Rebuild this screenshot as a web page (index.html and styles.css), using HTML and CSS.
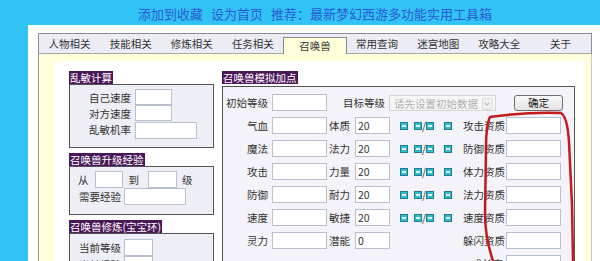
FILE: index.html
```html
<!DOCTYPE html>
<html lang="zh-CN">
<head>
    <meta charset="UTF-8">
    <title>梦幻西游多功能实用工具箱</title>
    <link rel="stylesheet" href="styles.css">
</head>
<body>

    <div class="header">
        <span>添加到收藏</span><span>设为首页</span><span>推荐：最新梦幻西游多功能实用工具箱</span>
    </div>

    <div class="page">
        <div class="tabs">
            <div class="tab">人物相关</div>
            <div class="tab">技能相关</div>
            <div class="tab">修炼相关</div>
            <div class="tab">任务相关</div>
            <div class="tab active">召唤兽</div>
            <div class="tab">常用查询</div>
            <div class="tab">迷宫地图</div>
            <div class="tab">攻略大全</div>
            <div class="tab">关于</div>
        </div>

        <div class="content">
            <div class="panel">

                <!-- left column -->
                <div class="col-left">
                    <div class="group">
                        <div class="caption">乱敏计算</div>
                        <div class="box box-speed">
                            <span class="lbl">自己速度</span><input class="inp w37">
                            <span class="lbl">对方速度</span><input class="inp w37">
                            <span class="lbl">乱敏机率</span><input class="inp w62">
                        </div>
                    </div>

                    <div class="group">
                        <div class="caption">召唤兽升级经验</div>
                        <div class="box box-exp">
                            <div class="line">
                                <span class="t-from">从</span><input class="inp w28 m-from">
                                <span class="t-to">到</span><input class="inp w29 m-to">
                                <span class="t-lv">级</span>
                            </div>
                            <div class="line">
                                <span class="t-need">需要经验</span><input class="inp w62 m-need">
                            </div>
                        </div>
                    </div>

                    <div class="group">
                        <div class="caption">召唤兽修炼(宝宝环)</div>
                        <div class="box box-ring">
                            <div class="line">
                                <span class="t-need">当前等级</span><input class="inp w29 m-need">
                            </div>
                            <div class="line">
                                <span class="t-need">当前经验</span><input class="inp w29 m-need">
                            </div>
                        </div>
                    </div>
                </div>

                <!-- right column -->
                <div class="col-right">
                    <div class="caption">召唤兽模拟加点</div>
                    <div class="box box-sim">
                        <div class="row">
                            <span class="la">初始等级</span><input class="inp ia">
                            <span class="lt">目标等级</span>
                            <div class="select">请先设置初始数据<span class="arrow"></span></div>
                            <button class="btn">确定</button>
                        </div>
                        <div class="row">
                            <span class="la">气血</span><input class="inp ia">
                            <span class="lb">体质</span><input class="inp ib" value="20">
                            <span class="icons"><i class="ico"></i><i class="ico"></i>/<i class="ico"></i><i class="ico"></i></span>
                            <span class="lc">攻击资质</span><input class="inp ic">
                        </div>
                        <div class="row">
                            <span class="la">魔法</span><input class="inp ia">
                            <span class="lb">法力</span><input class="inp ib" value="20">
                            <span class="icons"><i class="ico"></i><i class="ico"></i>/<i class="ico"></i><i class="ico"></i></span>
                            <span class="lc">防御资质</span><input class="inp ic">
                        </div>
                        <div class="row">
                            <span class="la">攻击</span><input class="inp ia">
                            <span class="lb">力量</span><input class="inp ib" value="20">
                            <span class="icons"><i class="ico"></i><i class="ico"></i>/<i class="ico"></i><i class="ico"></i></span>
                            <span class="lc">体力资质</span><input class="inp ic">
                        </div>
                        <div class="row">
                            <span class="la">防御</span><input class="inp ia">
                            <span class="lb">耐力</span><input class="inp ib" value="20">
                            <span class="icons"><i class="ico"></i><i class="ico"></i>/<i class="ico"></i><i class="ico"></i></span>
                            <span class="lc">法力资质</span><input class="inp ic">
                        </div>
                        <div class="row">
                            <span class="la">速度</span><input class="inp ia">
                            <span class="lb">敏捷</span><input class="inp ib" value="20">
                            <span class="icons"><i class="ico"></i><i class="ico"></i>/<i class="ico"></i><i class="ico"></i></span>
                            <span class="lc">速度资质</span><input class="inp ic">
                        </div>
                        <div class="row">
                            <span class="la">灵力</span><input class="inp ia">
                            <span class="lb">潜能</span><input class="inp ib" value="0">
                            <span class="icons"></span>
                            <span class="lc">躲闪资质</span><input class="inp ic">
                        </div>
                        <div class="row">
                            <span class="la"></span><span class="ia"></span>
                            <span class="lb"></span><span class="ib"></span>
                            <span class="icons"></span>
                            <span class="lc">成长率</span><input class="inp ic">
                        </div>
                    </div>
                </div>

            </div>
        </div>
    </div>

    <!-- hand drawn red circle over the screenshot -->
    <svg class="mark" width="600" height="261" viewBox="0 0 600 261">
        <path d="M493 261 C488 246 485 232 485 214 L486 150 C486 134 487 123 490 117 C512 114 540 112 561 113 C566 116 568 126 569 142 L572 205 L573 261" />
    </svg>

</body>
</html>
```

FILE: styles.css
```css
body {
    margin: 0;
    height: 261px;
    overflow: hidden;
    background: #31c3f3;
    font-family: "Noto Sans CJK SC", sans-serif;
    font-size: 10.5px;
    color: #333;
    position: relative;
}

.header {
    height: 25px;
    line-height: 28px;
    padding-left: 138px;
    font-size: 13px;
    color: #2a5bd4;
    white-space: nowrap;
}

.header span {
    margin-right: 8px;
}

.page {
    margin-left: 28px;
    height: 236px;
    background: #fff;
    padding: 8px 8px 0 10px;
    box-sizing: border-box;
}

.tabs {
    display: flex;
    height: 19px;
    background: #ececf5;
    border: 1px solid #8c8c9c;
    border-bottom: 1px solid #a8a8a8;
}

.tab {
    flex: 1;
    text-align: center;
    line-height: 20px;
    color: #333;
    white-space: nowrap;
}

.tab.active {
    margin: 3px 0 -1px;
    line-height: 16px;
    background: #ffffdc;
    border: 1px solid #8c8c8c;
    border-bottom: none;
}

.content {
    height: 200px;
    background: #ffffdc;
    border-left: 1px solid #9a9a9a;
    border-right: 1px solid #c8c8c8;
    padding: 7px 6px 0 16px;
}

.panel {
    display: flex;
    gap: 8px;
    height: 100%;
    background: #fff;
    padding: 10px 0 0 14px;
    box-sizing: border-box;
}

.caption {
    display: inline-block;
    height: 13px;
    line-height: 13px;
    padding: 0 1px;
    background: #4a1858;
    color: #fff;
    white-space: nowrap;
    vertical-align: top;
}

.box {
    border: 1px solid #555;
    background: #eeeef6;
    box-sizing: border-box;
}

.inp {
    height: 17px;
    padding: 0 2px;
    margin: 0;
    border: 1px solid #b9bfcf;
    background: #fff;
    box-sizing: border-box;
    font-family: inherit;
    font-size: 10.5px;
    color: #333;
}

.w28 { width: 28px; }
.w29 { width: 29px; }
.w37 { width: 37px; }
.w62 { width: 62px; }

/* left column */
.col-left {
    width: 145px;
    flex-shrink: 0;
}

.group {
    margin-bottom: 5px;
}

.group .caption {
    display: block;
    width: fit-content;
}

.box-speed {
    display: grid;
    grid-template-columns: 61px auto;
    column-gap: 4px;
    grid-auto-rows: 16px;
    align-items: center;
    height: 64px;
    padding-top: 4px;
}

.box-speed .lbl {
    text-align: right;
}

.box-speed .inp {
    height: 16px;
}

.box-speed .w62 {
    height: 17px;
    margin-top: 2px;
}

.box-exp {
    height: 49px;
    padding-top: 4px;
}

.box-ring {
    height: 60px;
    padding-top: 5px;
}

.line {
    display: flex;
    align-items: center;
    height: 17px;
}

.t-from { margin-left: 8px; }
.m-from { margin-left: 6px; }
.t-to { margin-left: 6px; }
.m-to { margin-left: 9px; }
.t-lv { margin-left: 5px; }
.t-need { margin-left: 9px; width: 44px; }
.m-need { margin-left: 1px; }

/* right column */
.col-right {
    width: 353px;
    flex-shrink: 0;
}

.box-sim {
    height: 200px;
    padding-top: 4px;
    background: #f3f3f9;
}

.row {
    display: flex;
    align-items: center;
    height: 23px;
    white-space: nowrap;
}

.row > * {
    flex-shrink: 0;
}

.la {
    width: 45px;
    text-align: right;
    margin-right: 4px;
}

.ia { width: 55px; }

.lb {
    width: 28px;
    padding-left: 2px;
    box-sizing: border-box;
}

.ib { width: 35px; }

.lt {
    margin-left: 16px;
}

.select {
    position: relative;
    margin-left: 4px;
    width: 107px;
    height: 16px;
    line-height: 15px;
    padding-left: 4px;
    box-sizing: border-box;
    border: 1px solid #d4d4d4;
    background: #f6f6f6;
    color: #b0b0b0;
}

.select .arrow {
    position: absolute;
    right: 2px;
    top: 2px;
    width: 9px;
    height: 10px;
    border: 1px solid #dcdcdc;
    border-radius: 2px;
    background: #f0f0f0;
}

.select .arrow::after {
    content: "";
    position: absolute;
    left: 2px;
    top: 2px;
    width: 3px;
    height: 3px;
    border-right: 1px solid #bbb;
    border-bottom: 1px solid #bbb;
    transform: rotate(45deg);
}

.btn {
    margin-left: 18px;
    width: 49px;
    height: 16px;
    padding: 0;
    border: 1px solid #707070;
    border-radius: 3px;
    background: linear-gradient(#fbfbfb, #e2e2e2);
    font-family: inherit;
    font-size: 10.5px;
    line-height: 13px;
    color: #222;
}

.icons {
    display: flex;
    align-items: center;
    width: 73px;
    padding-left: 10px;
    box-sizing: border-box;
    color: #333;
}

.ico {
    position: relative;
    flex-shrink: 0;
    width: 8px;
    height: 8px;
    margin-right: 6px;
    border: 1px solid #1d7d92;
    background: #36b9cc;
    box-sizing: border-box;
}

.ico::after {
    content: "";
    position: absolute;
    left: 1px;
    top: 2px;
    width: 4px;
    height: 2px;
    background: #d8f4f8;
}

.icons .ico:nth-child(2) {
    margin-right: 0;
}

.icons .ico:nth-child(3) {
    margin-left: 0;
    margin-right: 10px;
}

.lc {
    width: 40px;
    text-align: right;
    margin-right: 3px;
}

.ic { width: 55px; }

.mark {
    position: absolute;
    left: 0;
    top: 0;
    pointer-events: none;
}

.mark path {
    fill: none;
    stroke: #c41a1a;
    stroke-width: 2.5;
    stroke-linecap: round;
}
```
